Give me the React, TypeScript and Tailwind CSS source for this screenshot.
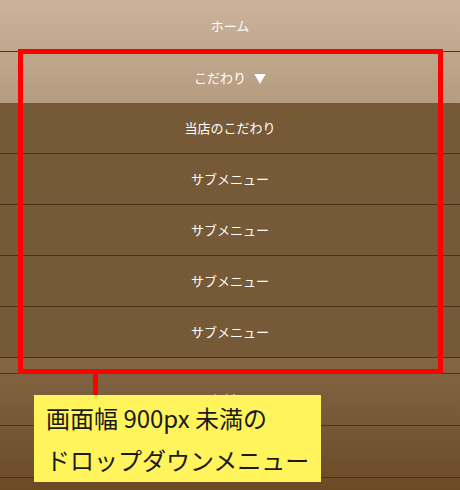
const subItems = ["当店のこだわり", "サブメニュー", "サブメニュー", "サブメニュー", "サブメニュー"];

export default function App() {
  return (
    <div className="relative h-[490px] w-[460px] overflow-hidden bg-gradient-to-b from-[#cab39a] to-[#6b4b26] font-['Noto_Sans_CJK_JP','Noto_Sans',sans-serif] text-[13px] text-white">
      <ul>
        <li className="flex h-[52px] items-center justify-center border-b border-[#4b3419]">ホーム</li>
        <li>
          <div className="flex h-[51px] items-center justify-center">
            こだわり<span className="ml-[8px] text-[12px]">▼</span>
          </div>
          {/* dropdown */}
          <ul className="bg-[#765a37]">
            {subItems.map((label, i) => (
              <li key={i} className="flex h-[51px] items-center justify-center border-b border-[#4b3419]">
                {label}
              </li>
            ))}
          </ul>
          <div className="h-[16px] border-b border-[#4b3419]" />
        </li>
        <li className="flex h-[52px] items-center justify-center border-b border-[#4b3419]">お料理</li>
        <li className="h-[52px] border-b border-[#4b3419]" />
      </ul>

      {/* annotation overlay */}
      <div className="absolute left-[18px] top-[49px] h-[325px] w-[425px] border-[5px] border-[#ff0000]" />
      <div className="absolute left-[93px] top-[374px] h-[21px] w-[5px] bg-[#ff0000]" />
      <div className="absolute left-[34px] top-[395px] h-[87px] w-[287px] bg-[#fff45c] pl-[12px] pt-[2px] text-[24px] leading-[42px] text-[#1a1a1a]">
        <p>画面幅 900px 未満の</p>
        <p>ドロップダウンメニュー</p>
      </div>
    </div>
  );
}
